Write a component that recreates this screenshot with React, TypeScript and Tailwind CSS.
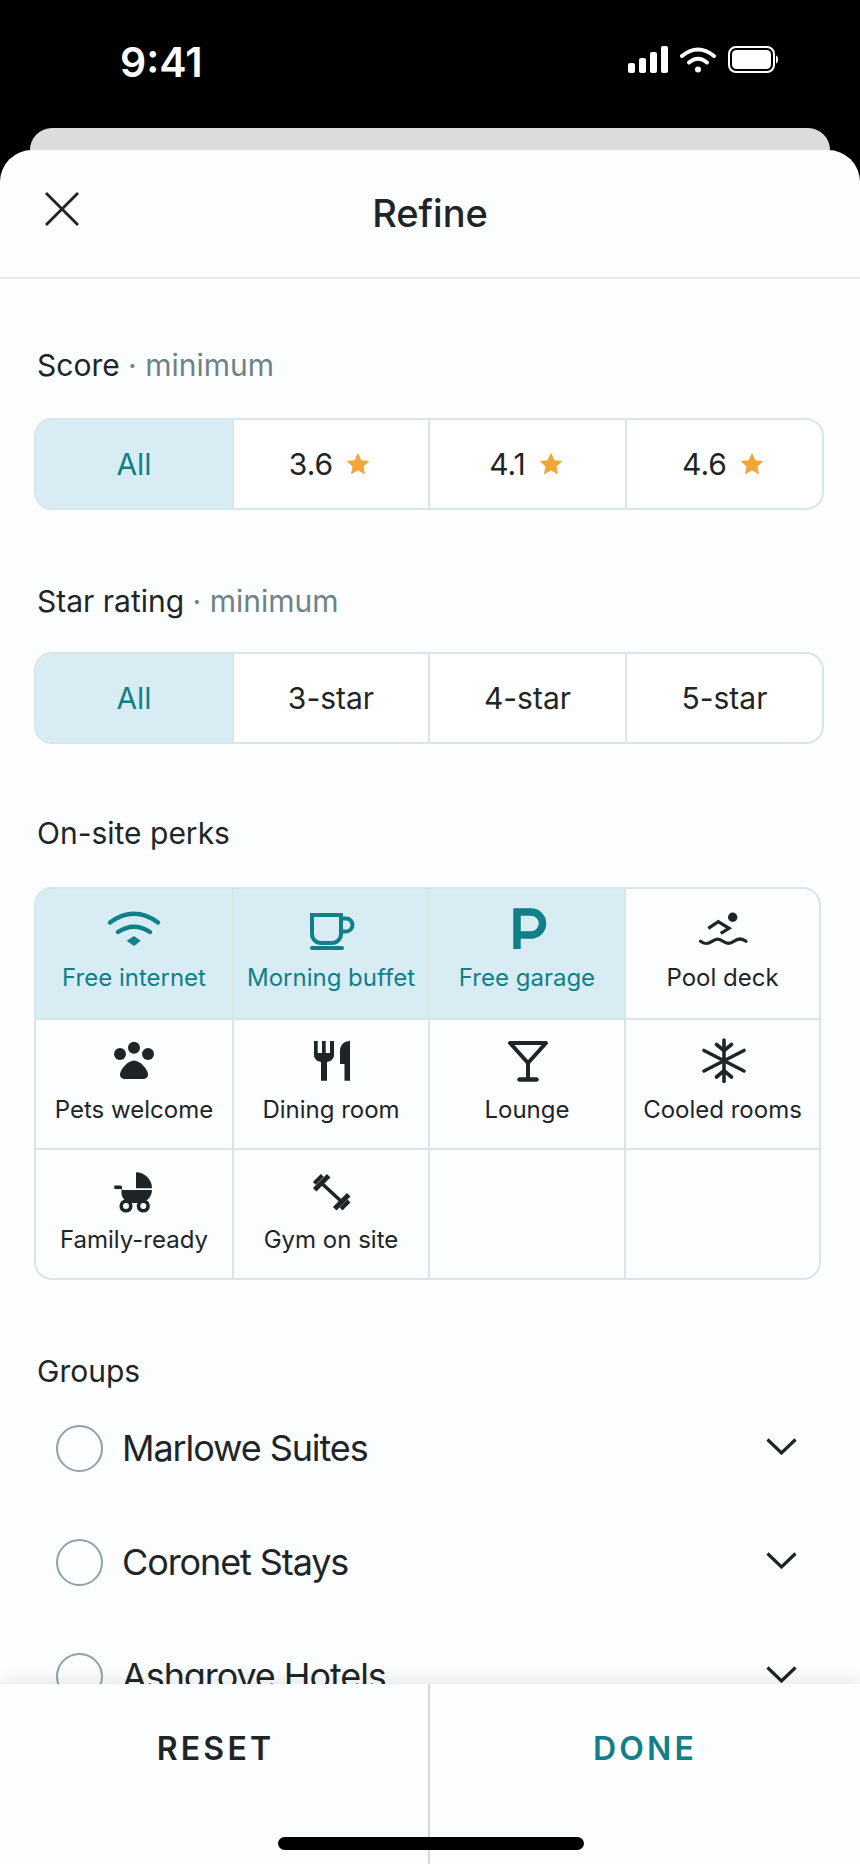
import type { ReactNode } from 'react';

const font = { fontFamily: 'Inter, "Noto Sans", sans-serif' };

const Star = () => (
  <svg width="24" height="24" viewBox="0 0 24 24" className="text-[#f2a63a]">
    <path fill="currentColor" d="M12 .8l3.4 7.4 8 .9-5.9 5.4 1.6 8L12 18.500l-7.100 4 1.600-8L.6 9.100l8-.9z" />
  </svg>
);

const WifiIcon = () => (
  <>
    <path d="M6 16.500Q30 -1 54 16.500" fill="none" stroke="currentColor" strokeWidth="4.400" strokeLinecap="round" />
    <path d="M14 26Q30 15.500 46 26" fill="none" stroke="currentColor" strokeWidth="4.400" strokeLinecap="round" />
    <path d="M22.700 34.700L30 30l6.700 4.700L30 40z" fill="currentColor" />
  </>
);

const CupIcon = () => (
  <g fill="none" stroke="currentColor" strokeWidth="4">
    <path d="M11 9H40V28a9 9 0 0 1-9 9H20a9 9 0 0 1-9-9Z" />
    <path d="M40 12.500h5a6.500 6.500 0 0 1 0 13h-5" />
    <path d="M11 42H41" strokeLinecap="round" />
  </g>
);

const ParkingIcon = () => (
  <path d="M20 43V6H34a11.500 11.500 0 0 1 0 23H20" fill="none" stroke="currentColor" strokeWidth="7.500" />
);

const SwimIcon = () => (
  <>
    <circle cx="39.700" cy="11.300" r="4.700" fill="currentColor" />
    <path d="M15.300 22.300L25.300 15.700 36 22.300 27.700 27.300" fill="none" stroke="currentColor" strokeWidth="3.300" />
    <path d="M7.500 35.300c4 3 7 3 11.500 0s7-3 11 0 7 3 11 0 8-3 12 0" fill="none" stroke="currentColor" strokeWidth="3.300" strokeLinecap="round" />
  </>
);

const PawIcon = () => (
  <g fill="currentColor">
    <circle cx="30" cy="9.700" r="6" />
    <circle cx="16" cy="16" r="6" />
    <circle cx="44" cy="16" r="6" />
    <path d="M30 22.500c6 0 14 9 14 14 0 3-2.500 4.500-5 4.500H21c-2.500 0-5-1.500-5-4.500 0-5 8-14 14-14z" />
  </g>
);

const DiningIcon = () => (
  <g fill="currentColor">
    <path d="M13 3h3.700v12H21V3h3.700v12H29V3h4v14c0 3-2 6-7 7v18.700h-6V24c-5-1-7-4-7-7z" />
    <path d="M49 3v39.700h-5.500V26H39V13c0-6 4-10 10-10z" />
  </g>
);

const LoungeIcon = () => (
  <g fill="none" stroke="currentColor" strokeWidth="4" strokeLinejoin="round">
    <path d="M13 5H49L31 25Z" />
    <path d="M31 25V41.500" />
    <path d="M22.500 41.500H39.500" strokeWidth="4.500" strokeLinecap="round" />
  </g>
);

const SnowIcon = () => (
  <g fill="none" stroke="currentColor" strokeWidth="3.600" strokeLinecap="round" strokeLinejoin="round">
    <path d="M31 2V43.500" />
    <path d="M11 33L51 12.500" />
    <path d="M11 12.500L51 33" />
    <path d="M23.500 6.500L31 12.700 38.500 6.500" />
    <path d="M23.500 39L31 32.700 38.500 39" />
  </g>
);

const StrollerIcon = () => (
  <g>
    <path d="M32 4.300a16 16 0 0 1 16 16H32Z" fill="currentColor" />
    <path d="M10.300 17.500H16.500a1.500 1.500 0 0 1 1.500 1.500V22H48c0 7-6 13-14 13h-5c-7 0-11.500-5-11.500-10V21H10.300Z" fill="currentColor" />
    <circle cx="22" cy="38" r="4.800" fill="#fbfdff" stroke="currentColor" strokeWidth="3.600" />
    <circle cx="39.300" cy="38" r="4.800" fill="#fbfdff" stroke="currentColor" strokeWidth="3.600" />
  </g>
);

const GymIcon = () => (
  <g fill="none" stroke="currentColor">
    <path d="M19 13.700L42.300 35.300" strokeWidth="3.500" />
    <path d="M13.700 21.700L27.700 7.700" strokeWidth="5" />
    <path d="M13.300 15.300L21.300 7.300" strokeWidth="4" />
    <path d="M33.700 40.700L47.700 26.700" strokeWidth="5" />
    <path d="M40 41L48 33" strokeWidth="4" />
  </g>
);

const perks = [
  { label: 'Free internet', icon: <WifiIcon />, on: true },
  { label: 'Morning buffet', icon: <CupIcon />, on: true },
  { label: 'Free garage', icon: <ParkingIcon />, on: true },
  { label: 'Pool deck', icon: <SwimIcon />, on: false },
  { label: 'Pets welcome', icon: <PawIcon />, on: false },
  { label: 'Dining room', icon: <DiningIcon />, on: false },
  { label: 'Lounge', icon: <LoungeIcon />, on: false },
  { label: 'Cooled rooms', icon: <SnowIcon />, on: false },
  { label: 'Family-ready', icon: <StrollerIcon />, on: false },
  { label: 'Gym on site', icon: <GymIcon />, on: false },
  { label: '', icon: null, on: false },
  { label: '', icon: null, on: false },
];

const Segmented = ({ items }: { items: { text: string; star?: boolean }[] }) => (
  <div className="mx-[34px] grid h-[92px] w-[790px] shrink-0 grid-cols-[196px_196px_197px_197px] overflow-hidden rounded-[18px] border-2 border-[#d9e5e6] bg-white">
    {items.map((item, i) => (
      <div
        key={item.text}
        className={`flex items-center justify-center gap-[13px] text-[30px] ${item.star ? 'pr-[3px]' : ''} ${i > 0 ? 'border-l-2 border-[#d9e5e6]' : ''} ${
          i === 0 ? 'bg-[#d7edf3] text-[#117f88]' : 'text-[#1f2527]'
        }`}
      >
        {item.text}
        {item.star && <Star />}
      </div>
    ))}
  </div>
);

const Label = ({ children, className }: { children: ReactNode; className: string }) => (
  <div className={`shrink-0 px-[37px] text-[30px] leading-[36px] text-[#1f2527] ${className}`}>{children}</div>
);

const Muted = ({ children }: { children: ReactNode }) => (
  <>
    <span className="text-[#6f8285]"> · </span>
    <span className="text-[#6f8285]">{children}</span>
  </>
);

const GroupRow = ({ name }: { name: string }) => (
  <div className="flex h-[114px] shrink-0 items-center pl-[56px] pr-[63px]">
    <div className="h-[47px] w-[47px] shrink-0 rounded-full border-2 border-[#8fa3a5]" />
    <div className="ml-[19px] flex-1 text-[36px] tracking-[-1.1px] text-[#1f2527]">{name}</div>
    <svg width="31" height="17" viewBox="0 0 31 17" fill="none" stroke="#1f2527" strokeWidth="3.200" className="mt-[-4px]">
      <path d="M1.500 1.500L15.500 15 29.500 1.500" />
    </svg>
  </div>
);

export default function App() {
  return (
    <div className="flex h-[1864px] w-[860px] flex-col overflow-hidden bg-black" style={font}>
      {/* status bar */}
      <div className="relative flex h-[128px] shrink-0 items-start justify-between pl-[120px] pr-[82px] pt-[37px] text-white">
        <div className="text-[41px] font-semibold leading-[50px]">9:41</div>
        <div className="mt-[9px] flex items-center gap-[12px]">
          <svg width="40" height="27" viewBox="0 0 40 27" fill="white">
            <rect x="0" y="17" width="7" height="10" rx="2" />
            <rect x="11" y="12" width="7" height="15" rx="2" />
            <rect x="22" y="6" width="7" height="21" rx="2" />
            <rect x="33" y="0" width="7" height="27" rx="2" />
          </svg>
          <svg width="36" height="27" viewBox="0 0 36 27" fill="none" stroke="white" strokeWidth="4" strokeLinecap="round">
            <path d="M2 10Q18 -3 34 10" />
            <path d="M9 16.500Q18 9 27 16.500" />
            <circle cx="18" cy="23.500" r="3" fill="white" stroke="none" />
          </svg>
          <svg width="50" height="27" viewBox="0 0 50 27">
            <rect x="1" y="1" width="45" height="25" rx="7" fill="none" stroke="white" strokeWidth="2" />
            <rect x="4" y="4" width="39" height="19" rx="4.500" fill="white" />
            <path d="M48 9.500c1.500.5 2 2 2 4s-.5 3.500-2 4z" fill="white" />
          </svg>
        </div>
      </div>

      {/* card behind the sheet */}
      <div className="mx-[30px] mb-[-38px] h-[60px] shrink-0 rounded-t-[22px] bg-[#dcdcdc]" />

      {/* sheet */}
      <div className="relative flex min-h-0 flex-1 flex-col overflow-hidden rounded-t-[32px] bg-[#fbfdff]">
        <div className="relative flex h-[129px] shrink-0 items-center justify-center border-b-2 border-[#e3e9eb]">
          <svg width="34" height="34" viewBox="0 0 34 34" className="absolute left-[45px] top-[42px] text-[#1f2527]" fill="none" stroke="currentColor" strokeWidth="2.800">
            <path d="M1 1L33 33" />
            <path d="M33 1L1 33" />
          </svg>
          <h1 className="text-[38px] font-medium text-[#1f2527]">Refine</h1>
        </div>

        <div className="flex min-h-0 flex-1 flex-col overflow-hidden">
          <Label className="mb-[35px] mt-[68px]">
            Score
            <Muted>minimum</Muted>
          </Label>
          <Segmented items={[{ text: 'All' }, { text: '3.6', star: true }, { text: '4.1', star: true }, { text: '4.6', star: true }]} />

          <Label className="mb-[33px] mt-[73px]">
            Star rating
            <Muted>minimum</Muted>
          </Label>
          <Segmented items={[{ text: 'All' }, { text: '3-star' }, { text: '4-star' }, { text: '5-star' }]} />

          <Label className="mb-[36px] mt-[71px]">On-site perks</Label>
          <div className="mx-[34px] grid w-[787px] shrink-0 grid-cols-[196px_196px_196px_195px] grid-rows-[129px_130px_130px] overflow-hidden rounded-[18px] border-2 border-[#d9e5e6]">
            {perks.map((perk, i) => (
              <div
                key={i}
                className={`flex flex-col items-center ${i < 4 ? 'pt-[17px]' : 'pt-[18px]'} ${i % 4 !== 0 ? 'border-l-2 border-[#d9e5e6]' : ''} ${i >= 4 ? 'border-t-2 border-[#d9e5e6]' : ''} ${
                  perk.on ? 'bg-[#d7edf3] text-[#117f88]' : 'text-[#1f2527]'
                }`}
              >
                {perk.icon && (
                  <svg width="60" height="48" viewBox="0 0 60 48" className="overflow-visible">
                    {perk.icon}
                  </svg>
                )}
                <div className="mt-[8px] text-[24px] leading-[32px]">{perk.label}</div>
              </div>
            ))}
          </div>

          <Label className="mb-[2px] mt-[73px]">Groups</Label>
          <GroupRow name="Marlowe Suites" />
          <GroupRow name="Coronet Stays" />
          <GroupRow name="Ashgrove Hotels" />
        </div>

        {/* footer */}
        <div className="relative grid h-[180px] shrink-0 grid-cols-[428px_432px] bg-[#fbfdff] text-[32px] font-semibold tracking-[0.1em] shadow-[0_-6px_14px_rgba(0,0,0,0.07)]">
          <div className="flex h-full items-start justify-center pt-[41px] pl-[3px] text-[#1f2527]">RESET</div>
          <div className="flex h-full items-start justify-center border-l-2 border-[#d5d9db] pt-[41px] text-[#117f88]">DONE</div>
          <div className="absolute bottom-[14px] left-[278px] h-[13px] w-[306px] rounded-full bg-black" />
        </div>
      </div>
    </div>
  );
}
